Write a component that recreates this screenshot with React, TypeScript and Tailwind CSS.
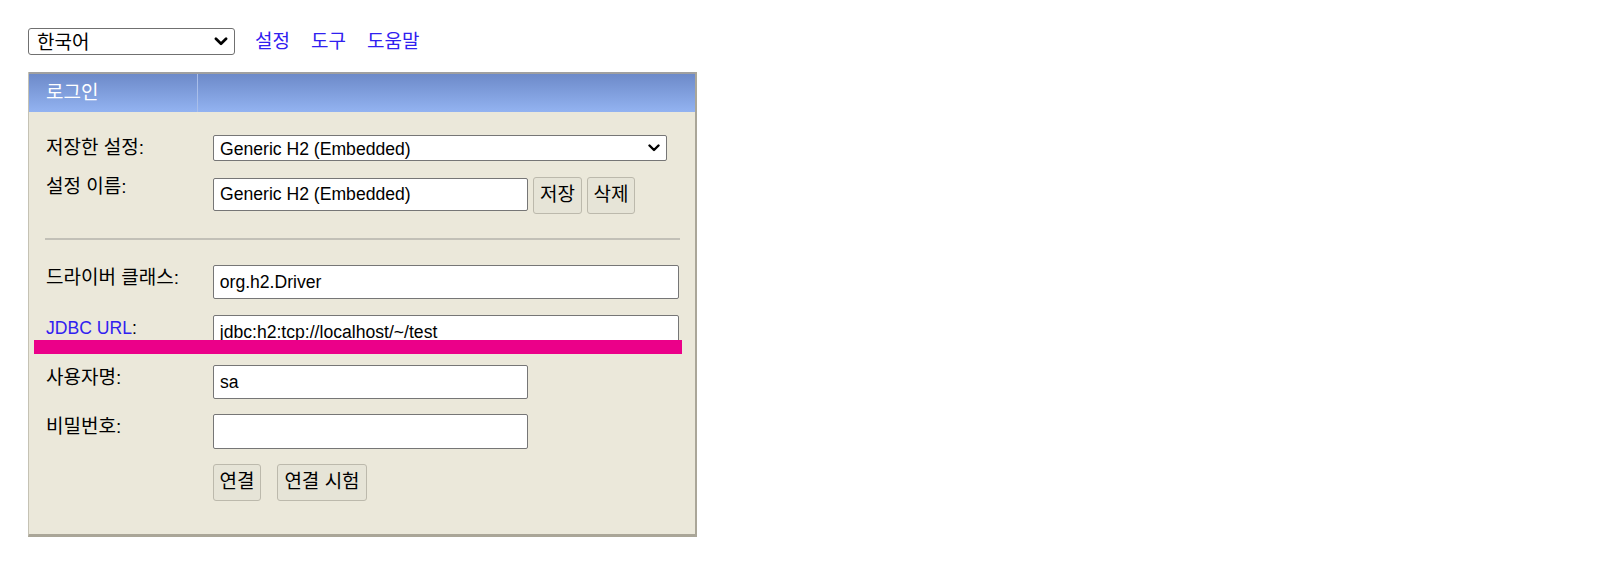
import { useState } from 'react';

function Chevron({ className }: { className?: string }) {
  return (
    <svg
      viewBox="0 0 12 8"
      className={className}
      fill="none"
      stroke="currentColor"
      strokeWidth="2.4"
      strokeLinecap="round"
      strokeLinejoin="round"
    >
      <path d="M1.5 1.5 6 6l4.5-4.5" />
    </svg>
  );
}

export default function App() {
  const [lang, setLang] = useState('ko');
  const [saved, setSaved] = useState('Generic H2 (Embedded)');
  const [name, setName] = useState('Generic H2 (Embedded)');
  const [driver, setDriver] = useState('org.h2.Driver');
  const [url, setUrl] = useState('jdbc:h2:tcp://localhost/~/test');
  const [user, setUser] = useState('sa');
  const [password, setPassword] = useState('');

  return (
    <div className="min-h-screen bg-white pl-[28px] pt-[28px] text-[17.6px] text-black font-['Liberation_Sans','Noto_Sans_CJK_KR',sans-serif]">
      {/* 상단 메뉴 */}
      <div className="flex items-center h-[27px]">
        <div className="relative w-[207px] h-[27px]">
          <select
            value={lang}
            onChange={(e) => setLang(e.target.value)}
            className="appearance-none w-full h-full border border-[#707070] rounded-[3px] bg-white pl-[8px] text-[19px] outline-none"
          >
            <option value="ko">한국어</option>
            <option value="en">English</option>
          </select>
          <Chevron className="pointer-events-none absolute right-[7px] top-[9px] w-[14px] h-[9px]" />
        </div>
        <nav className="ml-[20px] flex gap-[21px] text-[19px] leading-[24px] text-[#3020f0]">
          <a href="#">설정</a>
          <a href="#">도구</a>
          <a href="#">도움말</a>
        </nav>
      </div>

      {/* 로그인 패널 */}
      <div className="relative mt-[17px] w-[669px] border-l border-r-2 border-b-[3px] border-l-[#c5c2b4] border-r-[#aaa698] border-b-[#aaa698] bg-[#ebe8da]">
        <div className="flex h-[40px] border-t-2 border-t-[#a0a0a0] bg-linear-to-b from-[#6d8ac9] to-[#93b3f1]">
          <div className="flex w-[169px] items-center border-r border-r-[#a9bee9] pl-[17px] text-[19px] text-white">
            로그인
          </div>
        </div>

        <div className="pt-[23px] pl-[17px] pr-[16px] pb-[33px]">
          <div className="flex items-center h-[26px]">
            <div className="w-[167px] text-[19px] leading-[24px]">저장한 설정:</div>
            <div className="relative w-[454px] h-[26px]">
              <select
                value={saved}
                onChange={(e) => setSaved(e.target.value)}
                className="appearance-none w-full h-full border border-[#767676] rounded-[2px] bg-white pl-[6px] outline-none"
              >
                <option>Generic H2 (Embedded)</option>
                <option>Generic H2 (Server)</option>
              </select>
              <Chevron className="pointer-events-none absolute right-[7px] top-[9px] w-[12px] h-[8px]" />
            </div>
          </div>

          <div className="mt-[16px] flex items-start h-[37px]">
            <div className="w-[167px] text-[19px] leading-[20px]">설정 이름:</div>
            <input
              value={name}
              onChange={(e) => setName(e.target.value)}
              className="mt-[1px] w-[315px] h-[33px] border border-[#767676] rounded-[2px] bg-white px-[6px] outline-none"
            />
            <button className="ml-[5px] w-[49px] h-[37px] border border-[#bcb9ac] rounded-[3px] bg-[#e6e4d7] text-[19px]">
              저장
            </button>
            <button className="ml-[5px] w-[48px] h-[37px] border border-[#bcb9ac] rounded-[3px] bg-[#e6e4d7] text-[19px]">
              삭제
            </button>
          </div>

          <div className="mt-[24px] -ml-[1px] w-[635px] h-[2px] bg-[#c2c0b7]" />

          <div className="mt-[25px] flex items-start">
            <div className="w-[167px] pt-[1px] text-[19px] leading-[24px]">드라이버 클래스:</div>
            <input
              value={driver}
              onChange={(e) => setDriver(e.target.value)}
              className="w-[467px] h-[34px] border border-[#767676] rounded-[2px] bg-white px-[6px] outline-none"
            />
          </div>

          <div className="mt-[16px] flex items-start">
            <div className="w-[167px] pt-[1px] leading-[24px]">
              <span className="text-[#3020f0]">JDBC URL</span>:
            </div>
            <input
              value={url}
              onChange={(e) => setUrl(e.target.value)}
              className="w-[467px] h-[34px] border border-[#767676] rounded-[2px] bg-white px-[6px] outline-none"
            />
          </div>

          <div className="mt-[16px] flex items-start">
            <div className="w-[167px] pt-[1px] text-[19px] leading-[24px]">사용자명:</div>
            <input
              value={user}
              onChange={(e) => setUser(e.target.value)}
              className="w-[315px] h-[34px] border border-[#767676] rounded-[2px] bg-white px-[6px] outline-none"
            />
          </div>

          <div className="mt-[15px] flex items-start">
            <div className="w-[167px] pt-[1px] text-[19px] leading-[24px]">비밀번호:</div>
            <input
              type="password"
              value={password}
              onChange={(e) => setPassword(e.target.value)}
              className="w-[315px] h-[35px] border border-[#767676] rounded-[2px] bg-white px-[6px] outline-none"
            />
          </div>

          <div className="mt-[15px] flex gap-[16px] pl-[167px] text-[19px]">
            <button className="w-[48px] h-[37px] border border-[#bcb9ac] rounded-[3px] bg-[#e6e4d7]">
              연결
            </button>
            <button className="w-[90px] h-[37px] border border-[#bcb9ac] rounded-[3px] bg-[#e6e4d7]">
              연결 시험
            </button>
          </div>
        </div>

        {/* 강조 표시 */}
        <div className="absolute left-[5px] top-[268px] w-[648px] h-[14px] bg-[#eb0089]" />
      </div>
    </div>
  );
}
